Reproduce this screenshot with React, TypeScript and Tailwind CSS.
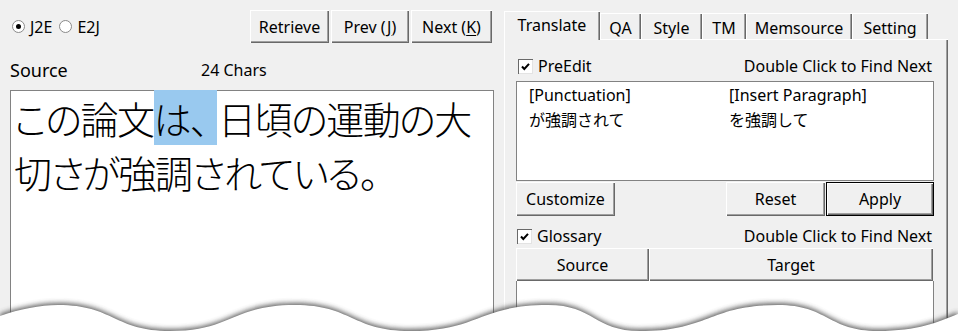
import React from 'react';

const ui = "font-['Noto_Sans','Noto_Sans_CJK_JP',sans-serif]";
const raised = 'bg-[#f0f0f0] shadow-[inset_1px_1px_0_#fff,inset_-1px_-1px_0_#696969,inset_-2px_-2px_0_#a0a0a0]';
const tabEdge = 'bg-[#f0f0f0] shadow-[inset_1px_1px_0_#fff,inset_-1px_0_0_#696969,inset_-2px_0_0_#a0a0a0]';

const wave =
  'M0,316 C20,309 40,305 58,305 C114,305 114,331 170,331 C232,331 232,305 295,305 C352,305 352,331 410,331 C479,331 479,305 548,305 C594,305 594,331 640,331 C709,331 709,305 778,305 C828,305 828,331 878,331 C918,331 938,322 958,314 L958,340 L0,340 Z';

function Button({ children, className }: { children: React.ReactNode; className: string }) {
  return (
    <div className={`flex items-center justify-center text-[16px] text-black ${raised} ${className}`}>
      {children}
    </div>
  );
}

function Check({ label }: { label: string }) {
  return (
    <div className="flex items-center gap-[5px]">
      <div className="w-[15px] h-[15px] bg-white shadow-[inset_1px_1px_0_#696969,inset_-1px_-1px_0_#e3e3e3] flex items-center justify-center">
        <svg width="11" height="11" viewBox="0 0 11 11">
          <path d="M2 5.5 L4.3 8 L9 2.8" fill="none" stroke="#000" strokeWidth="2" />
        </svg>
      </div>
      <span className="text-[16px]">{label}</span>
    </div>
  );
}

function Radio({ label, checked }: { label: string; checked?: boolean }) {
  return (
    <div className="flex items-center gap-[5px]">
      <div className="w-[13px] h-[13px] rounded-full bg-white border border-[#8a8a8a] flex items-center justify-center">
        {checked && <div className="w-[5px] h-[5px] rounded-full bg-black" />}
      </div>
      <span className="text-[16px]">{label}</span>
    </div>
  );
}

const tabs = [
  { name: 'QA', w: 'w-[41px]' },
  { name: 'Style', w: 'w-[61px]' },
  { name: 'TM', w: 'w-[44px]' },
  { name: 'Memsource', w: 'w-[106px]' },
  { name: 'Setting', w: 'w-[76px]' },
];

export default function App() {
  return (
    <div className={`relative w-[958px] h-[332px] overflow-hidden bg-[#f0f0f0] text-black ${ui} flex`}>
      {/* left side */}
      <div className="w-[504px] flex flex-col pt-[10px]">
        <div className="flex items-center justify-between pl-[12px] pr-[12px]">
          <div className="flex items-center gap-[7px]">
            <Radio label="J2E" checked />
            <Radio label="E2J" />
          </div>
          <div className="flex gap-[2px]">
            <Button className="w-[79px] h-[33px]">Retrieve</Button>
            <Button className="w-[78px] h-[33px]">
              <span>
                Prev (<span className="underline underline-offset-2">J</span>)
              </span>
            </Button>
            <Button className="w-[81px] h-[33px]">
              <span>
                Next (<span className="underline underline-offset-2">K</span>)
              </span>
            </Button>
          </div>
        </div>
        <div className="flex items-center h-[24px] mt-[15px] pl-[10px]">
          <span className="text-[18px] leading-[24px] w-[191px]">Source</span>
          <span className="text-[16px]">24 Chars</span>
        </div>
        <div className="ml-[10px] mt-[8px] w-[484px] flex-1 bg-white border border-[#828282] pl-[3px]">
          <p className="text-[38px] leading-[54px] tracking-[-1.5px] font-light [font-feature-settings:'palt'] font-['Noto_Sans_CJK_JP',sans-serif]">
            この論文
            <span className="bg-[#99c9ef] mr-[1px]">
              は<span className="tracking-[8px]">、</span>
            </span>
            日頃の運動の大切さが強調されている。
          </p>
        </div>
      </div>

      {/* right side */}
      <div className="flex flex-col pt-[11px] w-[454px]">
        <div className="flex items-end h-[28px]">
          <div className={`relative z-10 w-[96px] h-[29px] -mb-[1px] flex justify-center pt-[2px] text-[16px] ${tabEdge}`}>
            Translate
          </div>
          {tabs.map((t) => (
            <div key={t.name} className={`${t.w} h-[26px] flex justify-center pt-[3px] text-[16px] ${tabEdge}`}>
              {t.name}
            </div>
          ))}
        </div>
        <div className="w-[444px] flex-1 border-t border-l border-white shadow-[inset_-1px_0_0_#696969,inset_-2px_0_0_#a0a0a0] pl-[11px] flex flex-col">
          <div className="w-[418px] h-[20px] mt-[16px] flex items-center justify-between pl-[2px] pr-[2px]">
            <Check label="PreEdit" />
            <span className="text-[16px]">Double Click to Find Next</span>
          </div>
          <div className="w-[418px] h-[100px] mt-[5px] bg-white border border-[#828282] pl-[12px] text-[16px]">
            <div className="flex h-[25px] items-center">
              <span className="w-[200px]">[Punctuation]</span>
              <span>[Insert Paragraph]</span>
            </div>
            <div className="flex h-[26px] items-center">
              <span className="w-[200px]">が強調されて</span>
              <span>を強調して</span>
            </div>
          </div>
          <div className="w-[418px] h-[34px] mt-[1px] flex">
            <Button className="w-[99px] h-[34px]">Customize</Button>
            <div className="flex-1" />
            <Button className="w-[99px] h-[34px]">Reset</Button>
            <div className="w-[1px]" />
            <div className="w-[108px] h-[34px] border border-black">
              <Button className="w-full h-full">Apply</Button>
            </div>
          </div>
          <div className="w-[418px] h-[20px] mt-[10px] flex items-center justify-between pl-[1px] pr-[2px]">
            <Check label="Glossary" />
            <span className="text-[16px]">Double Click to Find Next</span>
          </div>
          <div className="w-[417px] h-[33px] mt-[2px] flex text-[16px]">
            <div className={`w-[133px] flex items-center justify-center ${raised}`}>Source</div>
            <div className={`flex-1 flex items-center justify-center ${raised}`}>Target</div>
          </div>
          <div className="w-[418px] flex-1 bg-white border border-t-0 border-[#828282]" />
        </div>
      </div>

      {/* torn edge */}
      <svg className="absolute left-0 top-0 pointer-events-none" width="958" height="332" viewBox="0 0 958 332">
        <defs>
          <filter id="tear" x="-5%" y="-50%" width="110%" height="200%">
            <feGaussianBlur stdDeviation="2.5" />
          </filter>
        </defs>
        <path d={wave} fill="#4a4a4a" opacity="0.85" filter="url(#tear)" transform="translate(0,-2)" />
        <path d={wave} fill="#fff" />
      </svg>
    </div>
  );
}
